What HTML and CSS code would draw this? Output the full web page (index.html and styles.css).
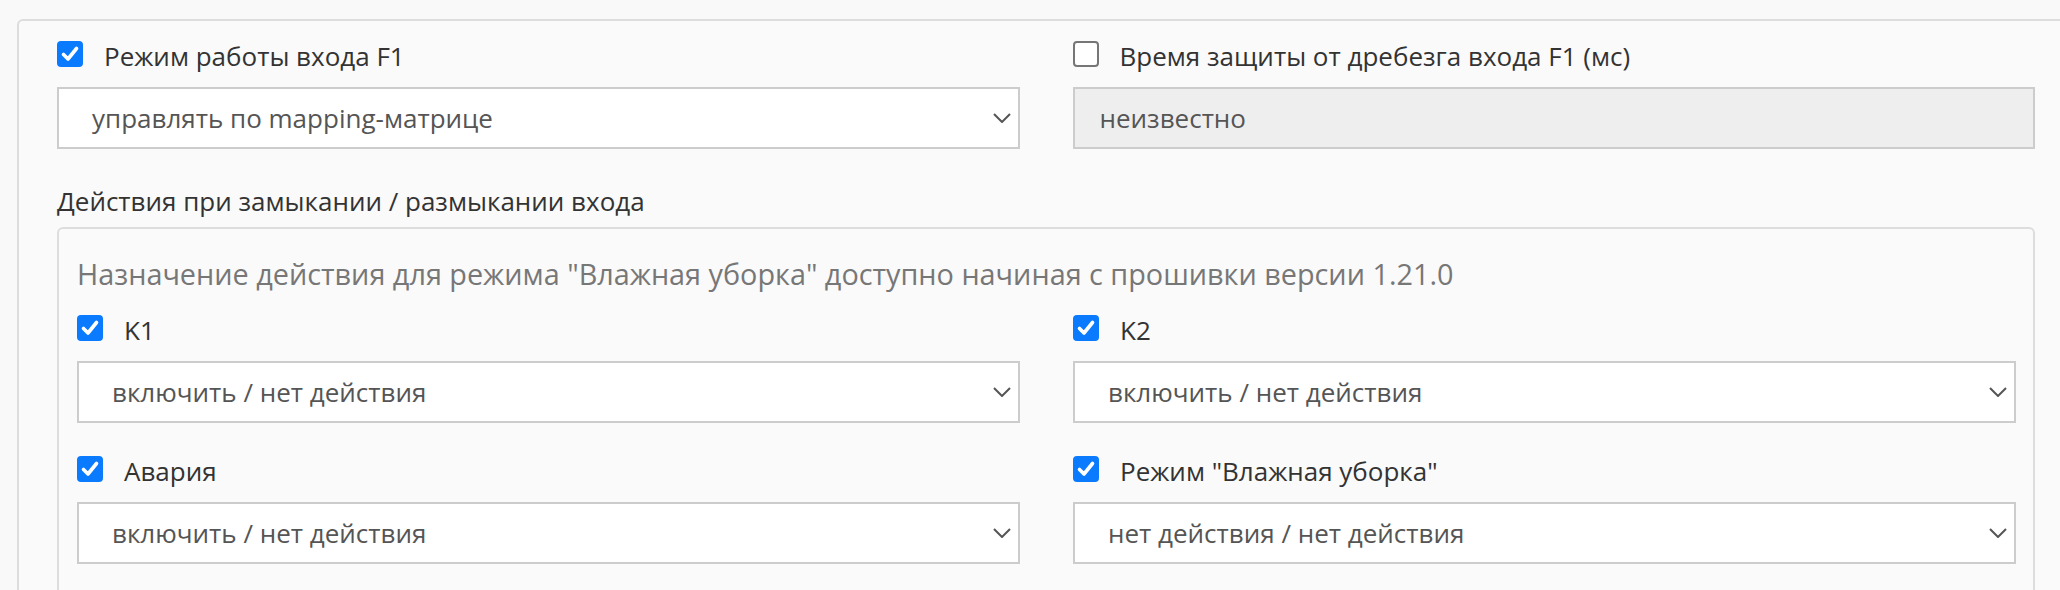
FILE: index.html
```html
<!DOCTYPE html>
<html lang="ru">
<head>
<meta charset="utf-8">
<title>Режим работы входа F1</title>
<link rel="stylesheet" href="styles.css">
</head>
<body>
<div class="card">
  <div class="grid">
    <div class="field">
      <label class="check-label">
        <span class="cb checked"><svg viewBox="0 0 26 26" width="26" height="26"><path d="M6.5 13.5 L11 18 L19.5 7.5" fill="none" stroke="#fff" stroke-width="3.6" stroke-linecap="round" stroke-linejoin="round"/></svg></span>
        <span class="label-text">Режим работы входа F1</span>
      </label>
      <div class="select">
        <span class="select-value">управлять по mapping-матрице</span>
        <svg class="chevron" viewBox="0 0 18 10" width="18" height="10"><path d="M1 1 L9 9 L17 1" fill="none" stroke="#555" stroke-width="2"/></svg>
      </div>
    </div>
    <div class="field">
      <label class="check-label">
        <span class="cb"></span>
        <span class="label-text">Время защиты от дребезга входа F1 (мс)</span>
      </label>
      <div class="input disabled">неизвестно</div>
    </div>
  </div>

  <div class="section-title">Действия при замыкании / размыкании входа</div>
  <div class="panel">
    <div class="hint">Назначение действия для режима "Влажная уборка" доступно начиная с прошивки версии 1.21.0</div>
    <div class="grid inner">
      <div class="field">
        <label class="check-label">
          <span class="cb checked"><svg viewBox="0 0 26 26" width="26" height="26"><path d="M6.5 13.5 L11 18 L19.5 7.5" fill="none" stroke="#fff" stroke-width="3.6" stroke-linecap="round" stroke-linejoin="round"/></svg></span>
          <span class="label-text">K1</span>
        </label>
        <div class="select">
          <span class="select-value">включить / нет действия</span>
          <svg class="chevron" viewBox="0 0 18 10" width="18" height="10"><path d="M1 1 L9 9 L17 1" fill="none" stroke="#555" stroke-width="2"/></svg>
        </div>
      </div>
      <div class="field">
        <label class="check-label">
          <span class="cb checked"><svg viewBox="0 0 26 26" width="26" height="26"><path d="M6.5 13.5 L11 18 L19.5 7.5" fill="none" stroke="#fff" stroke-width="3.6" stroke-linecap="round" stroke-linejoin="round"/></svg></span>
          <span class="label-text">K2</span>
        </label>
        <div class="select">
          <span class="select-value">включить / нет действия</span>
          <svg class="chevron" viewBox="0 0 18 10" width="18" height="10"><path d="M1 1 L9 9 L17 1" fill="none" stroke="#555" stroke-width="2"/></svg>
        </div>
      </div>
      <div class="field">
        <label class="check-label">
          <span class="cb checked"><svg viewBox="0 0 26 26" width="26" height="26"><path d="M6.5 13.5 L11 18 L19.5 7.5" fill="none" stroke="#fff" stroke-width="3.6" stroke-linecap="round" stroke-linejoin="round"/></svg></span>
          <span class="label-text">Авария</span>
        </label>
        <div class="select">
          <span class="select-value">включить / нет действия</span>
          <svg class="chevron" viewBox="0 0 18 10" width="18" height="10"><path d="M1 1 L9 9 L17 1" fill="none" stroke="#555" stroke-width="2"/></svg>
        </div>
      </div>
      <div class="field">
        <label class="check-label">
          <span class="cb checked"><svg viewBox="0 0 26 26" width="26" height="26"><path d="M6.5 13.5 L11 18 L19.5 7.5" fill="none" stroke="#fff" stroke-width="3.6" stroke-linecap="round" stroke-linejoin="round"/></svg></span>
          <span class="label-text">Режим "Влажная уборка"</span>
        </label>
        <div class="select">
          <span class="select-value">нет действия / нет действия</span>
          <svg class="chevron" viewBox="0 0 18 10" width="18" height="10"><path d="M1 1 L9 9 L17 1" fill="none" stroke="#555" stroke-width="2"/></svg>
        </div>
      </div>
    </div>
  </div>
</div>
</body>
</html>
```
FILE: styles.css
```css
html, body {
  margin: 0;
  padding: 0;
}
body {
  background: #f9f9f9;
  font-family: "Open Sans", "Noto Sans", sans-serif;
  font-size: 26px;
  line-height: 40px;
  color: #333;
  overflow: hidden;
  width: 2060px;
  height: 590px;
}
.card {
  margin: 19px 0 0 17px;
  width: 1978px;
  padding: 15px 38px 40px;
  border: 2px solid #ddd;
  border-radius: 6px;
  background: #fafafa;
}
.grid {
  display: grid;
  grid-template-columns: 1fr 1fr;
  column-gap: 53px;
  row-gap: 28px;
}
.field {
  display: flex;
  flex-direction: column;
}
.check-label {
  display: flex;
  align-items: flex-start;
  height: 40px;
  margin-bottom: 11px;
}
.cb {
  box-sizing: border-box;
  flex: none;
  width: 26px;
  height: 26px;
  margin-top: 5px;
  margin-right: 21px;
  border: 2px solid #767676;
  border-radius: 4px;
  background: #fff;
}
.cb.checked {
  border: none;
  background: #0a7aff;
}
.cb svg {
  display: block;
}
.label-text {
  white-space: nowrap;
}
.select {
  box-sizing: border-box;
  height: 62px;
  display: flex;
  align-items: center;
  justify-content: space-between;
  padding: 0 7px 0 33px;
  border: 2px solid #ccc;
  background: #fff;
  color: #555;
}
.chevron {
  display: block;
  flex: none;
}
.input {
  box-sizing: border-box;
  height: 62px;
  display: flex;
  align-items: center;
  padding: 0 25px;
  border: 2px solid #ccc;
  background: #fff;
  color: #555;
}
.input.disabled {
  background: #eee;
}
.section-title {
  margin-top: 32px;
}
.panel {
  margin-top: 6px;
  padding: 25px 17px 40px 18px;
  border: 2px solid #ddd;
  border-radius: 6px;
}
.hint {
  color: #777;
  font-size: 28.8px;
  margin-bottom: 16px;
  white-space: nowrap;
}
```
